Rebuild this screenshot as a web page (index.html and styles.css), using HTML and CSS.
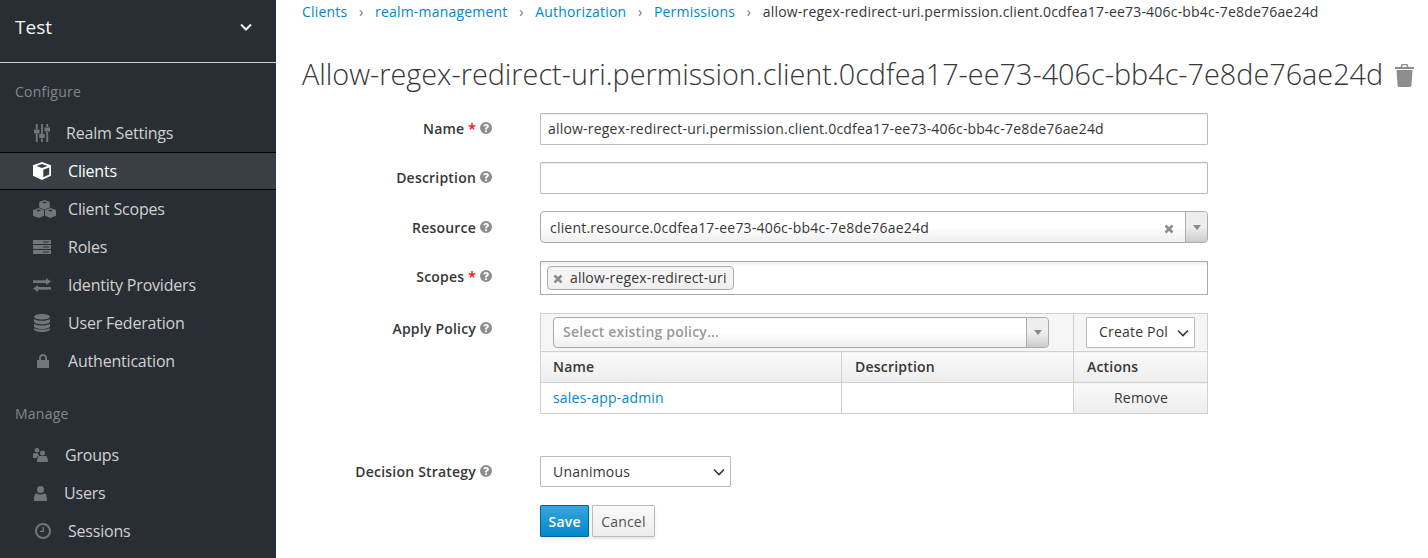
FILE: index.html
```html
<!DOCTYPE html>
<html lang="en">
<head>
    <meta charset="UTF-8">
    <title>Test - Permission</title>
    <link rel="stylesheet" href="styles.css">
</head>
<body>
    <svg class="sprite" xmlns="http://www.w3.org/2000/svg">
        <symbol id="i-help" viewBox="0 0 12 12">
            <path fill-rule="evenodd" d="M6 0a6 6 0 1 1 0 12A6 6 0 0 1 6 0zM5 8.400v1.700h2V8.400zM6 2C4.600 2 3.600 2.700 3.300 3.900l1.700.5C5.100 3.900 5.400 3.600 6 3.600c.5 0 .9.300.9.700 0 .4-.3.600-.8 1C5.400 5.800 5 6.200 5 7v.6h2v-.4c0-.3.200-.5.700-.9.700-.5 1.200-1 1.200-2C8.900 2.900 7.600 2 6 2z"/>
        </symbol>
        <symbol id="i-x" viewBox="0 0 10 10">
            <path d="M1.500 1.500l7 7M8.500 1.500l-7 7" fill="none" stroke="currentColor" stroke-width="2.600"/>
        </symbol>
        <symbol id="i-sliders" viewBox="0 0 16 18">
            <path d="M1.800 0h1.900v5H1.800zM1.800 10h1.900v8H1.800zM0 5.500h5.500v4H0zM7 0h1.900v10H7zM7 14.500h1.900V18H7zM5.200 10h5.500v4H5.200zM12.300 0h1.900v3h-1.900zM12.300 8h1.900v10h-1.900zM10.500 3.500H16v4h-5.500z"/>
        </symbol>
        <symbol id="i-cube" viewBox="0 0 18 18">
            <path fill-rule="evenodd" d="M9 0l9 3.300v10.400L9 18l-9-4.300V3.300zM9 2L3.500 4 9 6l5.500-2zM10.300 7.700v7.600l5.900-2.800V5.500z"/>
        </symbol>
        <symbol id="i-cubes" viewBox="0 0 23 18">
            <path fill-rule="evenodd" d="M11.500 0l5.300 2v5.400l-5.300 2.100-5.300-2.100V2zM11.500 1.500L9 2.500l2.500 1 2.500-1zM5.700 8l5.300 2v5.800L5.700 18 0 15.800V10zM5.700 9.500L3.200 10.500l2.500 1 2.500-1zM17.300 8l5.700 2v5.800L17.300 18 12 15.800V10zM17.300 9.500l-2.500 1 2.500 1 2.500-1z"/>
        </symbol>
        <symbol id="i-roles" viewBox="0 0 18 14">
            <path fill-rule="evenodd" d="M0 0h18v4H0zM10 1.500v1h6v-1zM0 5h18v4H0zM10 6.500v1h6v-1zM0 10h18v4H0zM10 11.500v1h6v-1z"/>
        </symbol>
        <symbol id="i-exchange" viewBox="0 0 18 14">
            <path d="M13 0l5 3.500L13 7V5H0V2.300h13zM5 7v2h13v2.700H5V14L0 10.500z"/>
        </symbol>
        <symbol id="i-database" viewBox="0 0 16 18">
            <path d="M8 0c4.400 0 8 1.200 8 2.800S12.400 5.600 8 5.600 0 4.400 0 2.800 3.600 0 8 0zM0 5c1.500 1.200 4.500 1.800 8 1.800S14.500 6.200 16 5v2.600c0 1.500-3.600 2.700-8 2.700s-8-1.200-8-2.700zM0 9.700c1.500 1.200 4.500 1.800 8 1.800s6.500-.6 8-1.800v2.600c0 1.500-3.600 2.700-8 2.700s-8-1.200-8-2.700zM0 13.900c1.500 1.200 4.500 1.700 8 1.700s6.500-.5 8-1.700v1.300C16 16.800 12.400 18 8 18s-8-1.200-8-2.800z"/>
        </symbol>
        <symbol id="i-lock" viewBox="0 0 12 14">
            <path fill-rule="evenodd" d="M6 0c2.300 0 4 1.700 4 4v2h2v8H0V6h2V4c0-2.300 1.700-4 4-4zM6 2C4.800 2 4 2.800 4 4v2h4V4c0-1.200-.8-2-2-2z"/>
        </symbol>
        <symbol id="i-groups" viewBox="0 0 15 14">
            <circle cx="4" cy="2.300" r="2.300"/>
            <circle cx="9.500" cy="5" r="2.500"/>
            <path d="M0 5.800c1-.8 2.500-1.100 4.800-.6.300 1.300 1 2 1.500 2.500C4.500 8.300 3.500 9.200 3 10H0zM6 8h7c1.300.8 2 3 2 6H4c0-3 .7-5.200 2-6z"/>
        </symbol>
        <symbol id="i-user" viewBox="0 0 13 15">
            <circle cx="6.500" cy="3.500" r="3.500"/>
            <path d="M2.500 7.300c1 .9 2.500 1.300 4 1.300s3-.4 4-1.300C12 8 13 9.500 13 15H0c0-5.500 1-7 2.500-7.700z"/>
        </symbol>
        <symbol id="i-clock" viewBox="0 0 16 16">
            <path fill-rule="evenodd" d="M8 0a8 8 0 1 1 0 16A8 8 0 0 1 8 0zM8 2a6 6 0 1 0 0 12A6 6 0 0 0 8 2zM7.500 4H9v5H5V7.700h2.500z"/>
        </symbol>
        <symbol id="i-trash" viewBox="0 0 19 23">
            <path fill-rule="evenodd" d="M6.500 0h6l1 3H19v2H0V3h5.500zM7.600 1.300L7.200 3h4.600l-.4-1.700zM1.500 6h16l-1 15c0 1.200-.7 2-2 2h-10c-1.300 0-2-.8-2-2z"/>
        </symbol>
    </svg>

    <div class="layout">
        <aside class="sidebar">
            <div class="realm">
                <span class="realm-name">Test</span>
                <svg class="realm-caret" viewBox="0 0 12 8"><path d="M1 1.500l5 5 5-5" fill="none" stroke="currentColor" stroke-width="2"/></svg>
            </div>

            <div class="nav-title nav-title-first">Configure</div>
            <ul class="nav-list">
                <li><a class="nav-link"><span class="nav-slot slot-33"><svg class="ic-sliders"><use href="#i-sliders"/></svg></span>Realm Settings</a></li>
                <li><a class="nav-link active"><span class="nav-slot"><svg class="ic-cube"><use href="#i-cube"/></svg></span>Clients</a></li>
                <li><a class="nav-link"><span class="nav-slot"><svg class="ic-cubes"><use href="#i-cubes"/></svg></span>Client Scopes</a></li>
                <li><a class="nav-link"><span class="nav-slot"><svg class="ic-roles"><use href="#i-roles"/></svg></span>Roles</a></li>
                <li><a class="nav-link"><span class="nav-slot"><svg class="ic-roles"><use href="#i-exchange"/></svg></span>Identity Providers</a></li>
                <li><a class="nav-link"><span class="nav-slot"><svg class="ic-sliders"><use href="#i-database"/></svg></span>User Federation</a></li>
                <li><a class="nav-link"><span class="nav-slot"><svg class="ic-lock"><use href="#i-lock"/></svg></span>Authentication</a></li>
            </ul>

            <div class="nav-title">Manage</div>
            <ul class="nav-list">
                <li><a class="nav-link"><span class="nav-slot slot-32"><svg class="ic-groups"><use href="#i-groups"/></svg></span>Groups</a></li>
                <li><a class="nav-link"><span class="nav-slot slot-31"><svg class="ic-user"><use href="#i-user"/></svg></span>Users</a></li>
                <li><a class="nav-link"><span class="nav-slot"><svg class="ic-clock"><use href="#i-clock"/></svg></span>Sessions</a></li>
            </ul>
        </aside>

        <main class="content">
            <ol class="breadcrumb">
                <li><a>Clients</a></li>
                <li><a>realm-management</a></li>
                <li><a>Authorization</a></li>
                <li><a>Permissions</a></li>
                <li>allow-regex-redirect-uri.permission.client.0cdfea17-ee73-406c-bb4c-7e8de76ae24d</li>
            </ol>

            <h1 class="page-title">Allow-regex-redirect-uri.permission.client.0cdfea17-ee73-406c-bb4c-7e8de76ae24d<svg class="trash"><use href="#i-trash"/></svg></h1>

            <form class="form">
                <div class="form-row row-name">
                    <label class="form-label">Name <span class="required">*</span><svg class="help"><use href="#i-help"/></svg></label>
                    <input class="form-input" type="text" value="allow-regex-redirect-uri.permission.client.0cdfea17-ee73-406c-bb4c-7e8de76ae24d">
                </div>
                <div class="form-row row-desc">
                    <label class="form-label">Description<svg class="help"><use href="#i-help"/></svg></label>
                    <input class="form-input" type="text">
                </div>
                <div class="form-row row-resource">
                    <label class="form-label">Resource<svg class="help"><use href="#i-help"/></svg></label>
                    <div class="select2">
                        <span class="select2-text">client.resource.0cdfea17-ee73-406c-bb4c-7e8de76ae24d</span>
                        <svg class="select2-clear"><use href="#i-x"/></svg>
                        <span class="select2-arrow"><i class="tri"></i></span>
                    </div>
                </div>
                <div class="form-row row-scopes">
                    <label class="form-label">Scopes <span class="required">*</span><svg class="help"><use href="#i-help"/></svg></label>
                    <div class="tag-box">
                        <span class="tag"><svg class="tag-x"><use href="#i-x"/></svg><span class="tag-text">allow-regex-redirect-uri</span></span>
                    </div>
                </div>
                <div class="form-row row-policy">
                    <label class="form-label">Apply Policy<svg class="help"><use href="#i-help"/></svg></label>
                    <table class="policy-table">
                        <colgroup>
                            <col class="col-name">
                            <col class="col-desc">
                            <col class="col-actions">
                        </colgroup>
                        <thead>
                            <tr class="toolbar-row">
                                <th colspan="2">
                                    <div class="select2 select2-policy">
                                        <span class="select2-text placeholder">Select existing policy...</span>
                                        <span class="select2-arrow"><i class="tri"></i></span>
                                    </div>
                                </th>
                                <th>
                                    <select class="plain-select create-select">
                                        <option>Create Policy...</option>
                                    </select>
                                </th>
                            </tr>
                            <tr class="head-row">
                                <th>Name</th>
                                <th>Description</th>
                                <th>Actions</th>
                            </tr>
                        </thead>
                        <tbody>
                            <tr>
                                <td><a>sales-app-admin</a></td>
                                <td></td>
                                <td class="action-cell">Remove</td>
                            </tr>
                        </tbody>
                    </table>
                </div>
                <div class="form-row row-strategy">
                    <label class="form-label">Decision Strategy<svg class="help"><use href="#i-help"/></svg></label>
                    <select class="plain-select strategy-select">
                        <option>Unanimous</option>
                    </select>
                </div>
                <div class="form-row row-buttons">
                    <span></span>
                    <div class="buttons">
                        <button type="button" class="btn btn-primary">Save</button>
                        <button type="button" class="btn btn-default">Cancel</button>
                    </div>
                </div>
            </form>
        </main>
    </div>
</body>
</html>
```

FILE: styles.css
```css
* {
    box-sizing: border-box;
}

html, body {
    margin: 0;
    padding: 0;
    height: 558px;
    overflow: hidden;
}

body {
    font-family: "Open Sans", sans-serif;
    font-size: 14px;
    letter-spacing: 0.2px;
    color: #363636;
    background: #fff;
}

.sprite {
    display: none;
}

.layout {
    display: flex;
    height: 558px;
}

/* sidebar */
.sidebar {
    flex: 0 0 276px;
    background: #292e34;
    color: #d1d1d1;
    letter-spacing: 0;
}

.realm {
    display: flex;
    align-items: center;
    justify-content: space-between;
    height: 63px;
    padding: 0 24px 8px 15px;
    border-bottom: 1px solid #d1d1d1;
    color: #f5f5f5;
}

.realm-name {
    font-size: 19px;
}

.realm-caret {
    width: 12px;
    height: 8px;
    color: #f5f5f5;
}

.nav-title {
    height: 56px;
    padding: 24px 15px 0;
    line-height: 19px;
    font-size: 14px;
    letter-spacing: 0.25px;
    color: #858789;
}

.nav-title-first {
    height: 51px;
    padding-top: 19px;
}

.nav-list {
    list-style: none;
    margin: 0;
    padding: 0;
}

.nav-link {
    display: flex;
    align-items: center;
    height: 38px;
    padding-left: 33px;
    font-size: 16px;
    letter-spacing: -0.2px;
    color: #d1d1d1;
}

.nav-link.active {
    background: #393f44;
    color: #fff;
    border-top: 1px solid #030303;
    border-bottom: 1px solid #030303;
}

.nav-slot {
    display: flex;
    align-items: center;
    flex: 0 0 35px;
    fill: #72767b;
}

.slot-33 {
    flex-basis: 33px;
}

.slot-32 {
    flex-basis: 32px;
}

.slot-31 {
    flex-basis: 31px;
}

.active .nav-slot {
    fill: #fff;
}

.ic-sliders { width: 16px; height: 18px; margin-left: 1px; }
.ic-cube { width: 18px; height: 18px; }
.ic-cubes { width: 23px; height: 18px; }
.ic-roles { width: 18px; height: 14px; }
.ic-lock { width: 12px; height: 14px; margin-left: 4px; }
.ic-groups { width: 15px; height: 14px; }
.ic-user { width: 13px; height: 15px; margin-left: 1px; }
.ic-clock { width: 16px; height: 16px; margin-left: 2px; }

/* main */
.content {
    flex: 1;
    padding: 0 14px 0 26px;
    min-width: 0;
}

.breadcrumb {
    display: flex;
    list-style: none;
    margin: 0;
    padding: 2px 0 0;
    height: 50px;
    line-height: 19px;
    font-size: 14px;
}

.breadcrumb li + li::before {
    content: "\203A";
    padding: 0 11.600px;
    color: #72767b;
}

.breadcrumb a,
.policy-table a {
    color: #0088ce;
}

.page-title {
    display: flex;
    align-items: center;
    margin: 0;
    height: 50px;
    padding-bottom: 4px;
    font-size: 28.800px;
    font-weight: 300;
    letter-spacing: 0;
    white-space: nowrap;
}

.trash {
    flex: none;
    width: 19px;
    height: 23px;
    margin: 4px 0 0 12px;
    fill: #8b8d8f;
}

.form {
    padding-top: 13px;
}

.form-row {
    display: grid;
    grid-template-columns: 190px 668px;
    column-gap: 48px;
}

.row-name { height: 49px; }
.row-desc { height: 49px; }
.row-resource { height: 50px; }
.row-scopes { height: 52px; }
.row-policy { height: 143px; }
.row-strategy { height: 49px; }

.form-label {
    display: flex;
    justify-content: flex-end;
    align-items: center;
    height: 32px;
    padding-bottom: 2px;
    font-weight: 600;
    white-space: pre;
}

.row-resource .form-label {
    padding-bottom: 0;
}

.required {
    color: #f00;
}

.help {
    flex: none;
    width: 12px;
    height: 12px;
    margin-left: 4px;
    fill: #8b8d8f;
}

.form-input {
    width: 668px;
    height: 32px;
    padding: 0 7px 2px;
    font: inherit;
    letter-spacing: inherit;
    color: #363636;
    border: 1px solid #bbb;
    border-radius: 1px;
    box-shadow: inset 0 1px 1px rgba(3, 3, 3, 0.075);
}

.select2 {
    display: flex;
    align-items: center;
    width: 668px;
    height: 32px;
    padding-left: 9px;
    background: linear-gradient(to bottom, #fff 50%, #eee 100%);
    border: 1px solid #aaa;
    border-radius: 4px;
    font-weight: 400;
}

.select2-text {
    flex: 1;
}

.select2-clear {
    flex: none;
    width: 10px;
    height: 10px;
    margin: 3px 11px 0 0;
    color: #8b8d8f;
}

.select2-arrow {
    display: flex;
    align-items: center;
    justify-content: center;
    width: 22px;
    height: 100%;
    background: linear-gradient(to bottom, #eee 50%, #ccc 100%);
    border-left: 1px solid #aaa;
    border-radius: 0 4px 4px 0;
}

.tri {
    width: 0;
    height: 0;
    border-left: 4px solid transparent;
    border-right: 4px solid transparent;
    border-top: 5px solid #888;
}

.tag-box {
    height: 34px;
    padding: 4px 6px;
    border: 1px solid #aaa;
    background: linear-gradient(to bottom, #eee 0, #fff 15%);
}

.tag {
    display: inline-flex;
    align-items: center;
    height: 24px;
    padding: 0 6px 0 5px;
    background: linear-gradient(to bottom, #f4f4f4 50%, #eee 100%);
    border: 1px solid #aaa;
    border-radius: 4px;
}

.tag-x {
    flex: none;
    width: 10px;
    height: 10px;
    margin: 2px 7px 0 0;
    color: #8b8d8f;
}

.tag-text {
    padding-bottom: 2px;
    letter-spacing: 0.16px;
}

.policy-table {
    width: 667px;
    height: 101px;
    border-collapse: collapse;
    table-layout: fixed;
}

.col-name { width: 301px; }
.col-desc { width: 232px; }
.col-actions { width: 134px; }

.policy-table th,
.policy-table td {
    border: 1px solid #d1d1d1;
    padding: 0 12px;
    text-align: left;
}

.policy-table th {
    font-weight: 600;
}

.toolbar-row th {
    height: 38px;
    background: #f5f5f5;
}

.policy-table .head-row th {
    height: 31px;
    padding-bottom: 2px;
    background: linear-gradient(to bottom, #fafafa 0, #ededed 100%);
}

.policy-table .head-row th + th {
    padding-left: 13px;
}

.policy-table td {
    height: 31px;
    padding-bottom: 2px;
}

.policy-table .action-cell {
    background: linear-gradient(to bottom, #fafafa 0, #ededed 100%);
    text-align: center;
    padding-right: 11px;
}

.select2-policy {
    width: 496px;
    height: 31px;
}

.placeholder {
    color: #999;
    font-weight: 600;
    padding-bottom: 2px;
}

.plain-select {
    appearance: none;
    height: 31px;
    padding: 0 24px 0 12px;
    font: inherit;
    font-weight: 400;
    letter-spacing: inherit;
    color: #363636;
    background: #fff url("data:image/svg+xml,%3Csvg xmlns='http://www.w3.org/2000/svg' width='12' height='8'%3E%3Cpath d='M1 1.500l5 5 5-5' fill='none' stroke='%23363636' stroke-width='1.600'/%3E%3C/svg%3E") no-repeat right 5px center;
    border: 1px solid #bbb;
    border-radius: 1px;
}

.create-select {
    width: 109px;
    padding-right: 26px;
    padding-bottom: 2px;
}

.strategy-select {
    width: 191px;
}

.buttons {
    display: flex;
    gap: 3px;
}

.btn {
    height: 32px;
    padding: 0 8px;
    font: inherit;
    letter-spacing: inherit;
    border-radius: 1px;
    box-shadow: 0 2px 3px rgba(3, 3, 3, 0.1);
}

.btn-primary {
    padding: 0 7.500px;
    font-weight: 600;
    color: #fff;
    background: linear-gradient(to bottom, #39a5dc 0, #0088ce 100%);
    border: 1px solid #00659c;
}

.btn-default {
    color: #4d5258;
    background: linear-gradient(to bottom, #fafafa 0, #ededed 100%);
    border: 1px solid #bbb;
}
```
